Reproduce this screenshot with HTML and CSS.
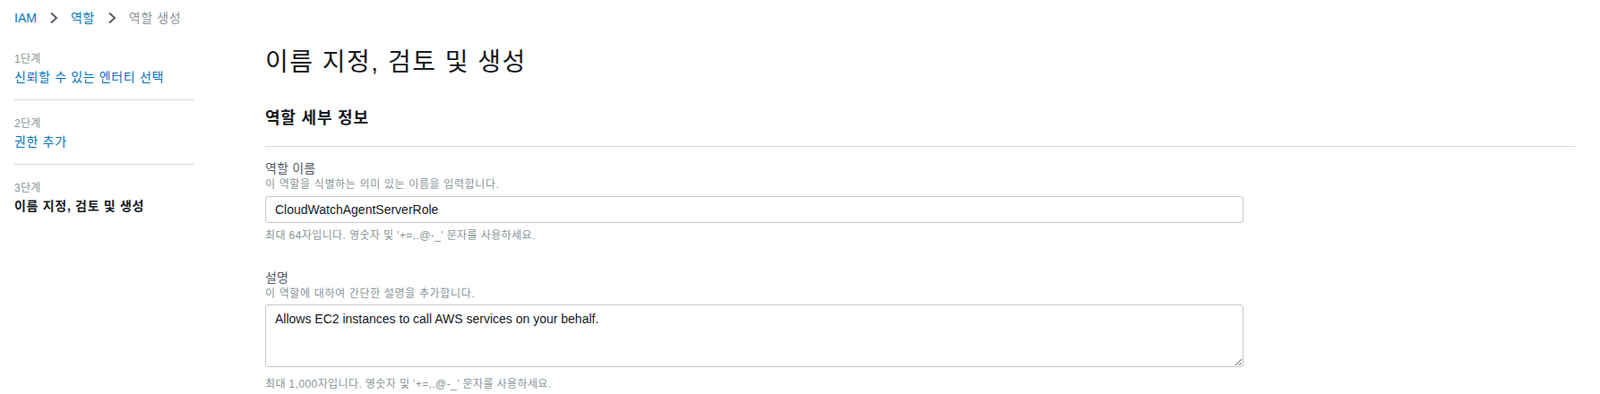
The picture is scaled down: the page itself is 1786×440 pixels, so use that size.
FILE: index.html
```html
<!DOCTYPE html>
<html lang="ko">
<head>
<meta charset="utf-8">
<title>역할 생성</title>
<link rel="stylesheet" href="styles.css">
</head>
<body>
<nav class="breadcrumb">
  <a class="crumb-link" href="#">IAM</a>
  <svg class="chev" width="10" height="14" viewBox="0 0 10 14"><polyline points="2,1.5 8,7 2,12.5" fill="none" stroke="#545b64" stroke-width="2"/></svg>
  <a class="crumb-link ko" href="#">역할</a>
  <svg class="chev" width="10" height="14" viewBox="0 0 10 14"><polyline points="2,1.5 8,7 2,12.5" fill="none" stroke="#545b64" stroke-width="2"/></svg>
  <span class="crumb-current ko">역할 생성</span>
</nav>
<div class="layout">
  <aside class="steps">
    <div class="step">
      <div class="step-num">1단계</div>
      <a class="step-title link" href="#">신뢰할 수 있는 엔터티 선택</a>
    </div>
    <div class="step">
      <div class="step-num">2단계</div>
      <a class="step-title link" href="#">권한 추가</a>
    </div>
    <div class="step last">
      <div class="step-num">3단계</div>
      <div class="step-title current">이름 지정, 검토 및 생성</div>
    </div>
  </aside>
  <main class="content">
    <h1 class="page-title">이름 지정, 검토 및 생성</h1>
    <h2 class="section-title">역할 세부 정보</h2>
    <div class="field">
      <div class="label">역할 이름</div>
      <div class="desc">이 역할을 식별하는 의미 있는 이름을 입력합니다.</div>
      <input class="text-input" type="text" value="CloudWatchAgentServerRole">
      <div class="hint">최대 64자입니다. 영숫자 및 '+=,.@-_' 문자를 사용하세요.</div>
    </div>
    <div class="field second">
      <div class="label">설명</div>
      <div class="desc">이 역할에 대하여 간단한 설명을 추가합니다.</div>
      <textarea class="text-area">Allows EC2 instances to call AWS services on your behalf.</textarea>
      <div class="hint hint-area">최대 1,000자입니다. 영숫자 및 '+=,.@-_' 문자를 사용하세요.</div>
    </div>
  </main>
</div>
</body>
</html>
```

FILE: styles.css
```css
* { box-sizing: border-box; }
html, body { margin: 0; padding: 0; background: #ffffff; }
body {
  font-family: "Liberation Sans", Arial, "Noto Sans CJK KR", sans-serif;
  color: #16191f;
  font-size: 14px;
}
a { text-decoration: none; }

.breadcrumb {
  height: 40px;
  display: flex;
  align-items: center;
  padding-left: 16px;
  font-size: 14px;
  line-height: 20px;
}
.ko { letter-spacing: 0.6px; }
.crumb-link { color: #0073bb; }
.crumb-current { color: #879596; }
.chev { margin: 0 14px 0 14px; display: block; }

.layout {
  display: flex;
  align-items: flex-start;
}
.steps {
  width: 200px;
  margin-left: 16px;
  flex: none;
}
.step {
  padding: 17px 0 14px 0;
  border-bottom: 1px solid #d5dbdb;
}
.step.last { border-bottom: none; }
.step-num {
  font-size: 12px;
  line-height: 18px;
  color: #879596;
  letter-spacing: 0.3px;
}
.step-title {
  display: block;
  font-size: 14px;
  line-height: 22px;
  letter-spacing: 0.65px;
}
.step-title.link { color: #0073bb; }
.step-title.current { color: #16191f; font-weight: bold; letter-spacing: 0.7px; }

.content {
  flex: 1;
  margin-left: 80px;
  margin-right: 28px;
  padding-top: 12px;
}
.page-title {
  margin: 0;
  font-size: 28px;
  line-height: 36px;
  font-weight: normal;
  color: #16191f;
  letter-spacing: 1.5px;
}
.section-title {
  margin: 32px 0 0 0;
  font-size: 18px;
  line-height: 24px;
  font-weight: bold;
  color: #16191f;
  padding-bottom: 19px;
  border-bottom: 1px solid #d5dbdb;
  letter-spacing: 0.8px;
}
.field { margin-top: 15px; width: 1092px; }
.field.second { margin-top: 30px; }
.label {
  font-size: 14px;
  line-height: 19px;
  color: #545b64;
  letter-spacing: 0.2px;
}
.desc {
  font-size: 12px;
  line-height: 16px;
  color: #879596;
  letter-spacing: 0.65px;
}
.text-input {
  display: block;
  margin-top: 5px;
  width: 1092px;
  height: 30px;
  border: 1px solid #c6c6cd;
  border-radius: 3px;
  padding: 0 10px;
  font-family: "Liberation Sans", Arial, sans-serif;
  font-size: 14px;
  color: #16191f;
  background: #fff;
  outline: none;
}
.text-area {
  display: block;
  margin-top: 4px;
  width: 1092px;
  height: 70px;
  border: 1px solid #c6c6cd;
  border-radius: 3px;
  padding: 5px 10px;
  font-family: "Liberation Sans", Arial, sans-serif;
  font-size: 14px;
  line-height: 20px;
  color: #16191f;
  background: #fff;
  resize: vertical;
  outline: none;
}
.hint {
  margin-top: 6px;
  font-size: 12px;
  line-height: 16px;
  color: #879596;
  letter-spacing: 0.4px;
}
.hint.hint-area { margin-top: 11px; }
```
